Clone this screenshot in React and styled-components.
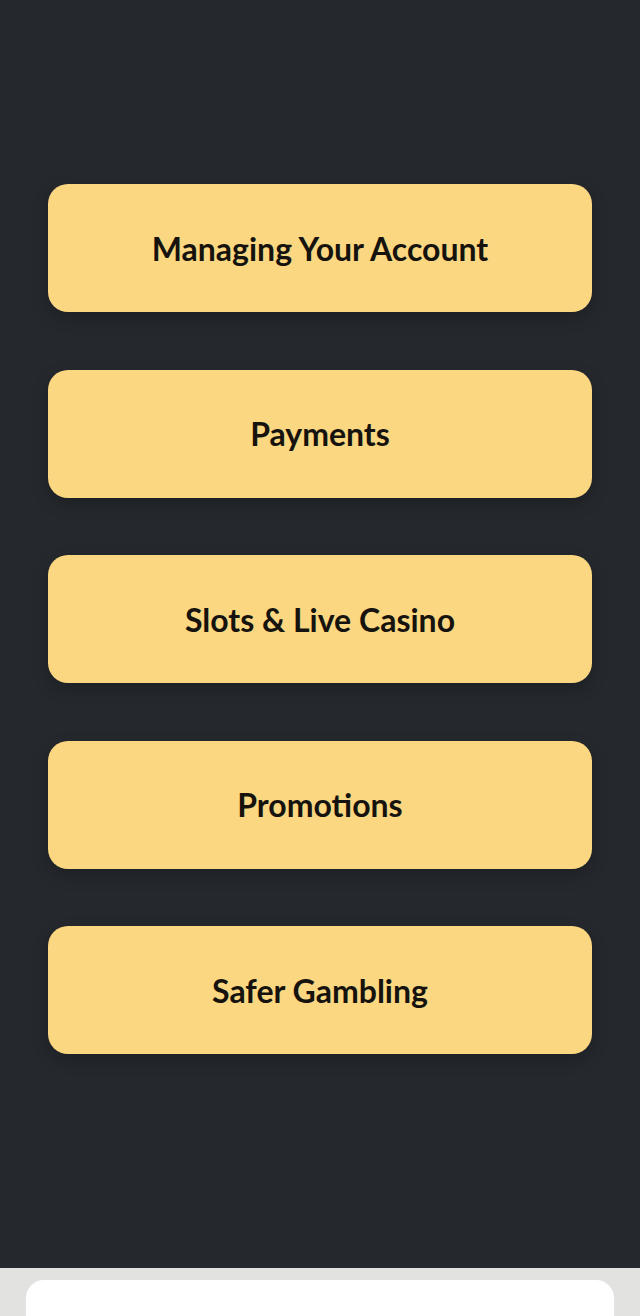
import React from "react";
import styled, { createGlobalStyle } from "styled-components";

const GlobalStyle = createGlobalStyle`
  html, body {
    margin: 0;
    padding: 0;
    background: #e2e2e1;
    font-family: Lato, "Open Sans", sans-serif;
  }
`;

const Page = styled.div`
  width: 640px;
  display: flex;
  flex-direction: column;
`;

const Topics = styled.section`
  background: #25282d;
  height: 1268px;
  box-sizing: border-box;
  padding: 184px 48px 0;
  display: flex;
  flex-direction: column;
  gap: 57.5px;
`;

const TopicButton = styled.button`
  height: 128px;
  width: 100%;
  border: none;
  border-radius: 20px;
  background: #fad780;
  color: #16130e;
  font-family: Lato, sans-serif;
  font-weight: 700;
  font-size: 32px;
  cursor: pointer;
  box-shadow: 0 6px 16px rgba(0, 0, 0, 0.22);
  display: flex;
  align-items: center;
  justify-content: center;
`;

const Footer = styled.footer`
  background: #e2e2e1;
  padding: 12px 26px 0;
  height: 48px;
  box-sizing: border-box;
  overflow: hidden;
`;

const FooterCard = styled.div`
  background: #ffffff;
  height: 60px;
  border-radius: 18px;
`;

const topics = [
  "Managing Your Account",
  "Payments",
  "Slots & Live Casino",
  "Promotions",
  "Safer Gambling",
];

const App = () => {
  return (
    <Page>
      <GlobalStyle />
      <Topics>
        {topics.map((t) => (
          <TopicButton key={t}>{t}</TopicButton>
        ))}
      </Topics>
      <Footer>
        <FooterCard />
      </Footer>
    </Page>
  );
};

export default App;
